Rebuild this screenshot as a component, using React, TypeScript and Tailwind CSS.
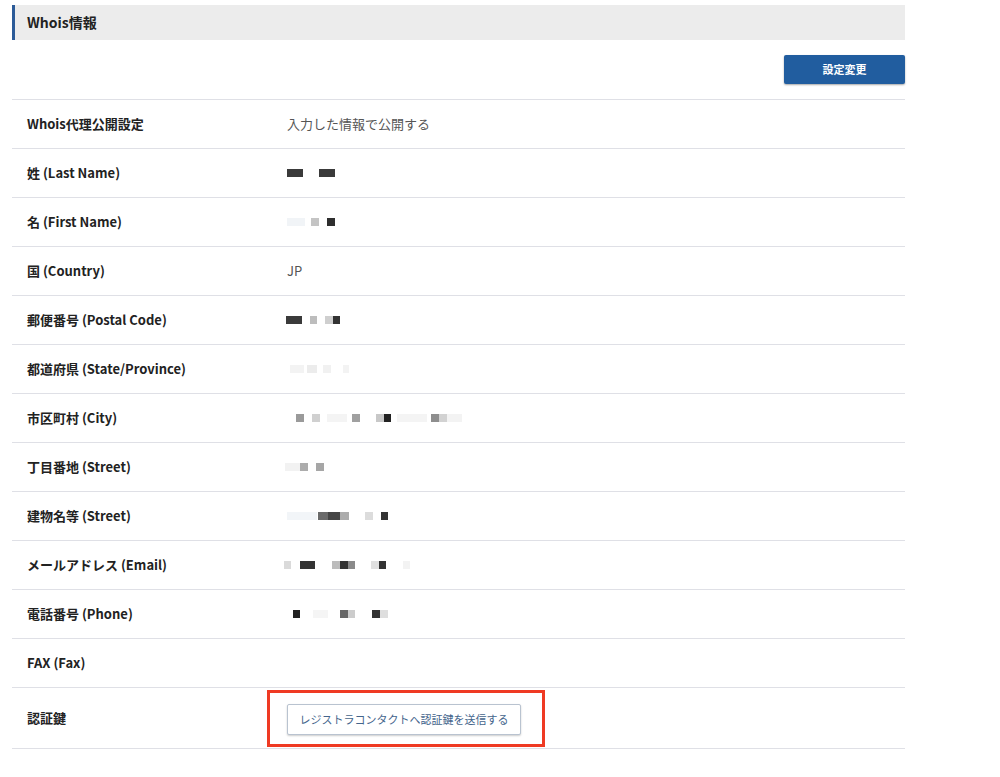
import React from 'react'

type Block = [number, number, string]

interface Row {
    label: string
    value?: string
    blocks?: Block[]
}

const rows: Row[] = [
    { label: 'Whois代理公開設定', value: '入力した情報で公開する' },
    { label: '姓 (Last Name)', blocks: [[0, 16, '#3a3a3a'], [32, 16, '#3a3a3a']] },
    { label: '名 (First Name)', blocks: [[0, 18, '#f1f4f7'], [24, 8, '#c4c4c4'], [40, 8, '#2e2e2e']] },
    { label: '国 (Country)', value: 'JP' },
    { label: '郵便番号 (Postal Code)', blocks: [[-1, 16, '#3a3a3a'], [23, 7, '#bdbdbd'], [38, 8, '#cfcfcf'], [46, 7, '#333333']] },
    { label: '都道府県 (State/Province)', blocks: [[3, 14, '#f3f3f3'], [20, 10, '#ececec'], [36, 8, '#f1f1f1'], [56, 6, '#f3f3f3']] },
    {
        label: '市区町村 (City)',
        blocks: [
            [9, 8, '#9a9a9a'], [25, 8, '#d0d0d0'], [40, 20, '#f4f4f4'], [65, 8, '#a0a0a0'], [89, 8, '#c8c8c8'], [97, 7, '#222222'],
            [110, 30, '#f4f4f4'], [144, 8, '#8e8e8e'], [152, 8, '#d2d2d2'], [160, 15, '#f3f3f3'],
        ],
    },
    { label: '丁目番地 (Street)', blocks: [[-2, 15, '#f2f2f2'], [13, 8, '#acacac'], [29, 8, '#a6a6a6']] },
    {
        label: '建物名等 (Street)',
        blocks: [[0, 30, '#f2f5f8'], [31, 10, '#6a6a6a'], [41, 12, '#454545'], [53, 9, '#acacac'], [78, 8, '#dcdcdc'], [94, 7, '#333333']],
    },
    {
        label: 'メールアドレス (Email)',
        blocks: [[-3, 7, '#dadada'], [13, 15, '#333333'], [45, 8, '#bcbcbc'], [53, 8, '#333333'], [61, 7, '#8a8a8a'], [84, 8, '#e0e0e0'], [92, 7, '#333333'], [116, 7, '#f3f3f3']],
    },
    {
        label: '電話番号 (Phone)',
        blocks: [[6, 7, '#222222'], [26, 15, '#f5f5f5'], [53, 8, '#666666'], [61, 7, '#cccccc'], [85, 8, '#333333'], [93, 8, '#dedede']],
    },
    { label: 'FAX (Fax)' },
]

// pixelated redaction of personal data
const Redacted: React.FC<{ blocks: Block[] }> = ({ blocks }) => (
    <svg width="200" height="8" viewBox="-4 0 200 8" className="-ml-[4px] block">
        {blocks.map(([x, w, c], i) => (
            <rect key={i} x={x} y={0} width={w} height={8} fill={c} />
        ))}
    </svg>
)

export default function App() {
    return (
        <div className="min-h-[777px] bg-white pt-[5px] pl-[12px] [font-family:'Noto_Sans_CJK_JP','Noto_Sans',sans-serif]">
            <div className="w-[893px]">
                <div className="flex h-[35px] items-center border-l-[3px] border-[#2c5b98] bg-[#ececec] pl-[12px]">
                    <h2 className="text-[14px] font-bold text-[#222]">Whois情報</h2>
                </div>

                <div className="flex justify-end py-[15px]">
                    <button className="h-[29px] w-[121px] rounded-[2px] bg-[#215d9f] text-[11px] font-bold text-white shadow-[0_1px_2px_rgba(0,0,0,0.35)]">
                        設定変更
                    </button>
                </div>

                <div className="border-b border-[#dfe0e6]">
                    {rows.map((row) => (
                        <div key={row.label} className="flex h-[49px] items-center border-t border-[#dfe0e6]">
                            <div className="w-[275px] pl-[15px] text-[13px] font-bold text-[#222]">{row.label}</div>
                            <div className="flex-1 text-[13px] text-[#555]">
                                {row.value}
                                {row.blocks && <Redacted blocks={row.blocks} />}
                            </div>
                        </div>
                    ))}
                    <div className="flex h-[61px] items-center border-t border-[#dfe0e6]">
                        <div className="w-[275px] pl-[15px] text-[13px] font-bold text-[#222]">認証鍵</div>
                        <div className="flex-1">
                            <div className="-ml-[20px] inline-block border-[3px] border-[#ef3a23] pt-[11px] pr-[21px] pb-[9px] pl-[17px]">
                                <button className="block h-[31px] w-[234px] rounded-[2px] border border-[#b9c3d0] bg-white text-[11px] text-[#44658c] shadow-[0_1px_2px_rgba(0,0,0,0.2)]">
                                    レジストラコンタクトへ認証鍵を送信する
                                </button>
                            </div>
                        </div>
                    </div>
                </div>
            </div>
        </div>
    )
}
